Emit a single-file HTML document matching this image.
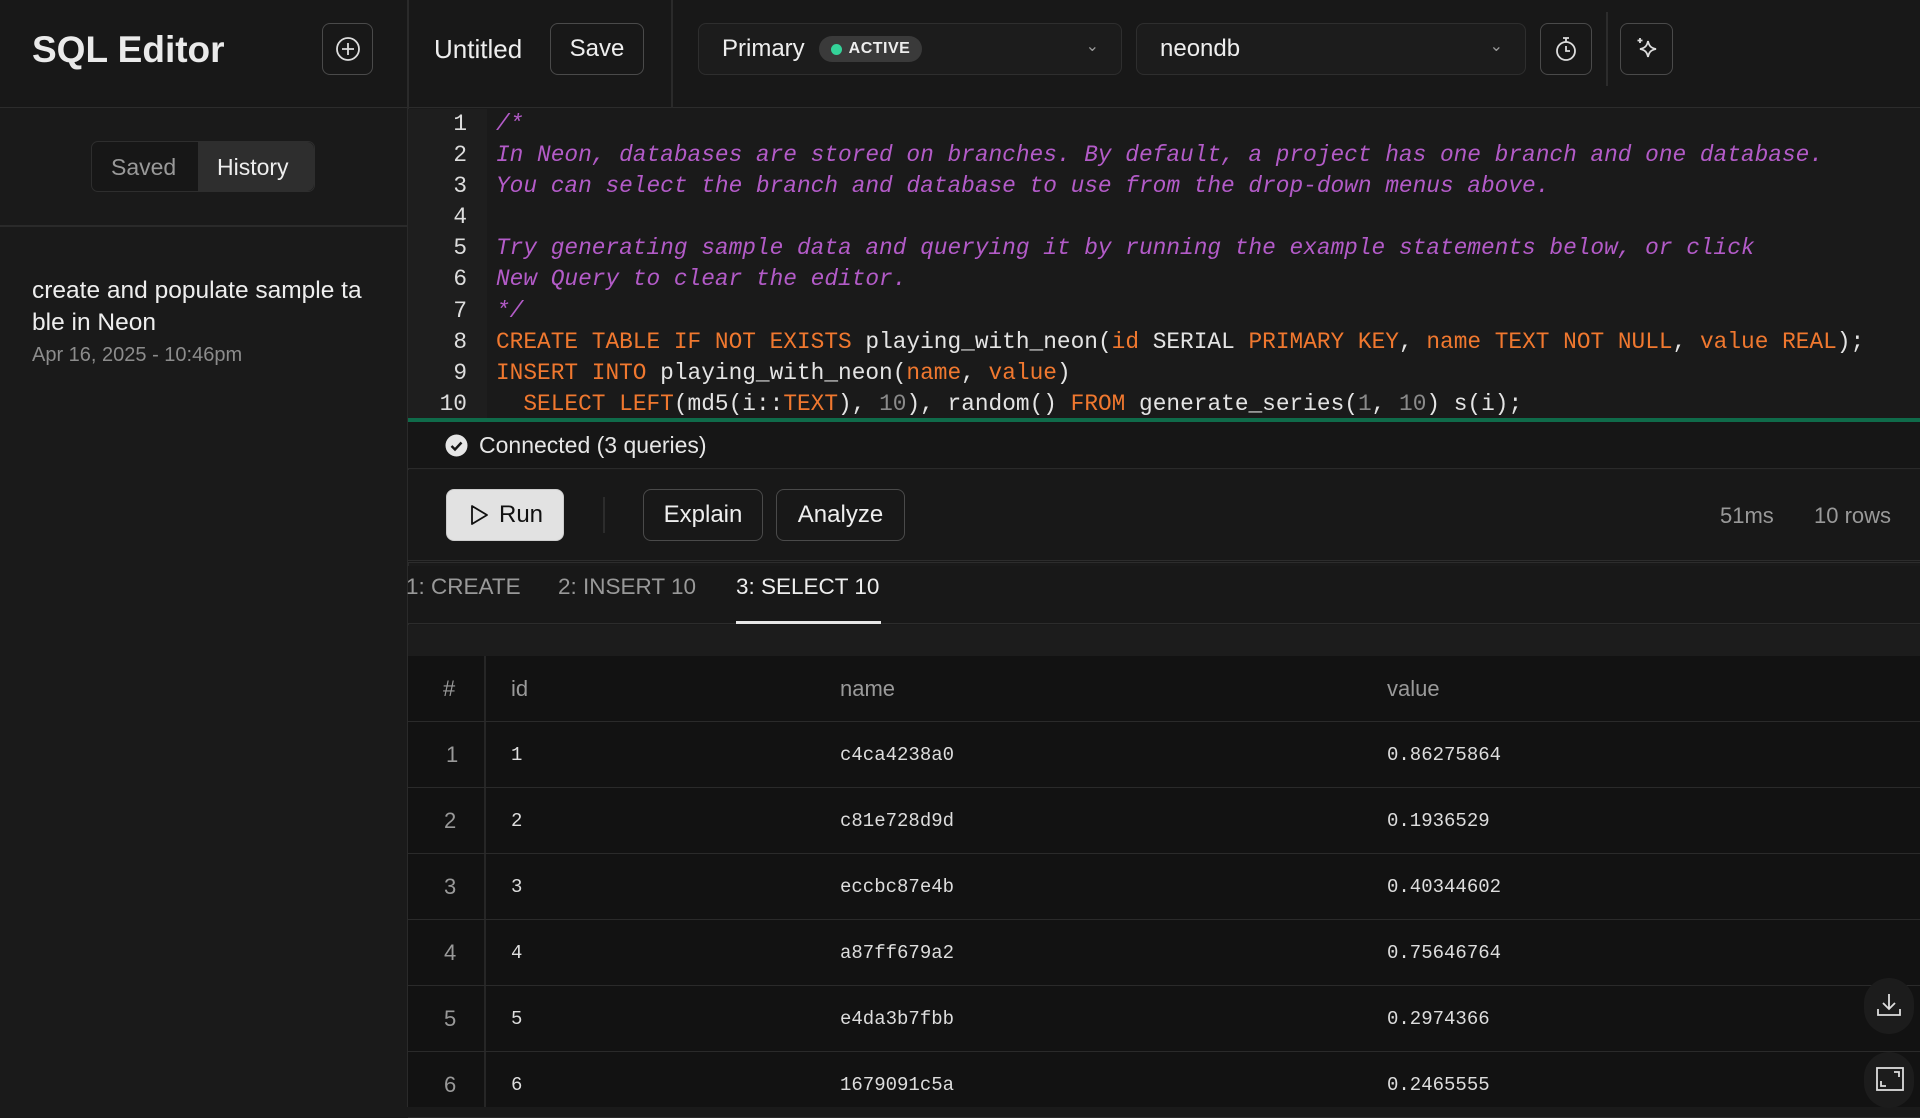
<!DOCTYPE html>
<html><head><meta charset="utf-8"><style>
*{box-sizing:border-box;margin:0;padding:0}
body{width:1920px;height:1107px;overflow:hidden;background:#1a1a1a;color:#e6e6e6;font-family:"Liberation Sans",sans-serif;position:relative}
.abs{position:absolute}
.btn{position:absolute;border:1px solid #4a4a4a;border-radius:8px;display:flex;align-items:center;justify-content:center;font-size:24px;color:#eee}
.code{position:absolute;left:496px;font-family:"Liberation Mono",monospace;font-size:22.8px;white-space:pre;line-height:31.1px;top:109px;color:#e4e4e4}
.gut{position:absolute;left:408px;width:79px;top:109px;font-family:"Liberation Mono",monospace;font-size:22.8px;line-height:31.1px;text-align:right;padding-right:20px;color:#ddd;background:#1e1e1e;height:311px}
.c{color:#b35bc8;font-style:italic}.k{color:#f0782f}.n{color:#8a8a8a}
.row{position:absolute;left:408px;right:0;height:66px;border-bottom:1.5px solid #2a2a2a;font-size:19px}
.row div{position:absolute;top:0;line-height:66px}
.mono{font-family:"Liberation Mono",monospace;color:#ddd}
</style></head><body>
<div class="abs" style="left:0;top:0;width:1920px;height:108px;background:#181818;border-bottom:1.5px solid #2c2c2c"></div>
<div class="abs" style="left:32px;top:29px;font-size:37px;font-weight:bold;color:#eaeaea">SQL Editor</div>
<div class="btn" style="left:322px;top:23px;width:51px;height:52px"><svg width="26" height="26" viewBox="0 0 26 26" fill="none" stroke="#ddd" stroke-width="1.8"><circle cx="13" cy="13" r="11"/><path d="M13 7v12M7 13h12"/></svg></div>
<div class="abs" style="left:407px;top:0;width:1.5px;height:1107px;background:#2a2a2a"></div>
<div class="abs" style="left:434px;top:34px;font-size:26px;color:#eee">Untitled</div>
<div class="btn" style="left:550px;top:23px;width:94px;height:52px">Save</div>
<div class="abs" style="left:671px;top:0;width:1.5px;height:108px;background:#2a2a2a"></div>
<div class="btn" style="left:698px;top:23px;width:424px;height:52px;justify-content:flex-start;padding-left:23px;border-color:#2e2e2e;background:#1c1c1c">Primary
 <span style="margin-left:14px;background:#3a3a3a;border-radius:14px;padding:4px 12px 4px 12px;font-size:16px;font-weight:bold;letter-spacing:.5px;display:flex;align-items:center"><span style="width:11px;height:11px;border-radius:50%;background:#34d399;margin-right:7px"></span>ACTIVE</span>
 <span style="position:absolute;right:22px;top:12px;font-size:16px;color:#999">&#8964;</span></div>
<div class="btn" style="left:1136px;top:23px;width:390px;height:52px;justify-content:flex-start;padding-left:23px;border-color:#2e2e2e;background:#1c1c1c">neondb<span style="position:absolute;right:22px;top:12px;font-size:16px;color:#999">&#8964;</span></div>
<div class="btn" style="left:1540px;top:23px;width:52px;height:52px"><svg width="26" height="28" viewBox="0 0 26 28" fill="none" stroke="#ddd" stroke-width="1.8"><circle cx="13" cy="16" r="9"/><path d="M10 3h6M13 3v4M13 11v5h4"/></svg></div>
<div class="abs" style="left:1606px;top:12px;width:1.5px;height:74px;background:#2c2c2c"></div>
<div class="btn" style="left:1620px;top:23px;width:53px;height:52px"><svg width="28" height="28" viewBox="0 0 28 28" fill="none" stroke="#ddd" stroke-width="1.8"><path d="M15 6c1 5 3 7 8 8-5 1-7 3-8 8-1-5-3-7-8-8 5-1 7-3 8-8z"/><path d="M7 3v5M4.5 5.5h5"/></svg></div>
<div class="abs" style="left:91px;top:141px;width:224px;height:51px;border:1px solid #2e2e2e;border-radius:7px;background:#171717"></div>
<div class="abs" style="left:198px;top:142px;width:116px;height:49px;background:#2e2e2e;border-radius:0 7px 7px 0"></div>
<div class="abs" style="left:111px;top:154px;font-size:23px;color:#999">Saved</div>
<div class="abs" style="left:217px;top:154px;font-size:23px;color:#eee">History</div>
<div class="abs" style="left:0;top:225px;width:407px;height:1.5px;background:#2a2a2a"></div>
<div class="abs" style="left:32px;top:275px;font-size:24.5px;line-height:32px;color:#eee;width:375px;white-space:nowrap">create and populate sample ta<br>ble in Neon</div>
<div class="abs" style="left:32px;top:344px;font-size:20px;color:#8c8c8c">Apr 16, 2025 - 10:46pm</div>
<div class="gut">1<br>2<br>3<br>4<br>5<br>6<br>7<br>8<br>9<br>10</div>
<div class="code"><span class="c">/*
In Neon, databases are stored on branches. By default, a project has one branch and one database.
You can select the branch and database to use from the drop-down menus above.

Try generating sample data and querying it by running the example statements below, or click
New Query to clear the editor.
*/</span>
<span class="k">CREATE TABLE IF NOT EXISTS</span> playing_with_neon(<span class="k">id</span> SERIAL <span class="k">PRIMARY KEY</span>, <span class="k">name</span> <span class="k">TEXT NOT NULL</span>, <span class="k">value</span> <span class="k">REAL</span>);
<span class="k">INSERT INTO</span> playing_with_neon(<span class="k">name</span>, <span class="k">value</span>)
  <span class="k">SELECT LEFT</span>(md5(i::<span class="k">TEXT</span>), <span class="n">10</span>), random() <span class="k">FROM</span> generate_series(<span class="n">1</span>, <span class="n">10</span>) s(i);</div>
<div class="abs" style="left:408px;top:418px;width:1512px;height:4px;background:#0f6b4a"></div>
<div class="abs" style="left:408px;top:422px;width:1512px;height:47px;background:#161616;border-bottom:1.5px solid #2a2a2a"></div>
<svg class="abs" style="left:445px;top:434px" width="23" height="23" viewBox="0 0 23 23"><circle cx="11.5" cy="11.5" r="11" fill="#e6e6e6"/><path d="M6.5 12l3.5 3.5 6.5-7" fill="none" stroke="#161616" stroke-width="2.4"/></svg>
<div class="abs" style="left:479px;top:432px;font-size:23px;color:#e6e6e6">Connected (3 queries)</div>
<div class="abs" style="left:408px;top:470px;width:1512px;height:93px;background:#181818;border-bottom:3px double #2c2c2c"></div>
<div class="btn" style="left:446px;top:489px;width:118px;height:52px;background:#e2e2e2;color:#111;border-color:#ccc"><svg width="24" height="24" viewBox="0 0 24 24" style="margin-right:8px"><path d="M5 3l15 9-15 9z" fill="none" stroke="#111" stroke-width="1.8" stroke-linejoin="round"/></svg>Run</div>
<div class="abs" style="left:603px;top:497px;width:1.5px;height:36px;background:#2c2c2c"></div>
<div class="btn" style="left:643px;top:489px;width:120px;height:52px">Explain</div>
<div class="btn" style="left:776px;top:489px;width:129px;height:52px">Analyze</div>
<div class="abs" style="left:1720px;top:503px;font-size:22px;color:#999">51ms</div>
<div class="abs" style="left:1814px;top:503px;font-size:22px;color:#999">10 rows</div>
<div class="abs" style="left:408px;top:566px;width:1512px;height:58px;background:#181818;border-bottom:1.5px solid #2c2c2c"></div>
<div class="abs" style="left:406px;top:574px;font-size:22.5px;color:#999">1: CREATE</div>
<div class="abs" style="left:558px;top:574px;font-size:22.5px;color:#999">2: INSERT 10</div>
<div class="abs" style="left:736px;top:574px;font-size:22.5px;color:#eee">3: SELECT 10</div>
<div class="abs" style="left:736px;top:621px;width:145px;height:3px;background:#e6e6e6"></div>
<div class="abs" style="left:408px;top:625px;width:1512px;height:31px;background:#1c1c1c"></div>
<div class="abs" style="left:408px;top:656px;width:1512px;height:451px;background:#121212"></div>
<div class="abs" style="left:484px;top:656px;width:1.5px;height:451px;background:#262626"></div>
<div class="row" style="top:656px;font-size:22px;color:#999"><div style="left:35px">#</div><div style="left:103px">id</div><div style="left:432px">name</div><div style="left:979px">value</div></div>
<div class="row" style="top:722px"><div style="left:38px;color:#999;font-size:22px">1</div><div class="mono" style="left:103px">1</div><div class="mono" style="left:432px">c4ca4238a0</div><div class="mono" style="left:979px">0.86275864</div></div>
<div class="row" style="top:788px"><div style="left:36px;color:#999;font-size:22px">2</div><div class="mono" style="left:103px">2</div><div class="mono" style="left:432px">c81e728d9d</div><div class="mono" style="left:979px">0.1936529</div></div>
<div class="row" style="top:854px"><div style="left:36px;color:#999;font-size:22px">3</div><div class="mono" style="left:103px">3</div><div class="mono" style="left:432px">eccbc87e4b</div><div class="mono" style="left:979px">0.40344602</div></div>
<div class="row" style="top:920px"><div style="left:36px;color:#999;font-size:22px">4</div><div class="mono" style="left:103px">4</div><div class="mono" style="left:432px">a87ff679a2</div><div class="mono" style="left:979px">0.75646764</div></div>
<div class="row" style="top:986px"><div style="left:36px;color:#999;font-size:22px">5</div><div class="mono" style="left:103px">5</div><div class="mono" style="left:432px">e4da3b7fbb</div><div class="mono" style="left:979px">0.2974366</div></div>
<div class="row" style="top:1052px"><div style="left:36px;color:#999;font-size:22px">6</div><div class="mono" style="left:103px">6</div><div class="mono" style="left:432px">1679091c5a</div><div class="mono" style="left:979px">0.2465555</div></div>
<div class="abs" style="left:1864px;top:978px;width:50px;height:56px;border-radius:25px;background:#1c1c1c"></div>
<svg class="abs" style="left:1876px;top:992px" width="26" height="26" viewBox="0 0 26 26" fill="none" stroke="#ddd" stroke-width="1.8"><path d="M13 2v15M7 11l6 6 6-6M2 17v6h22v-6"/></svg>
<div class="abs" style="left:1864px;top:1052px;width:50px;height:56px;border-radius:25px;background:#1c1c1c"></div>
<svg class="abs" style="left:1876px;top:1067px" width="28" height="24" viewBox="0 0 28 24" fill="none" stroke="#ddd" stroke-width="1.8"><rect x="1" y="1" width="26" height="22"/><path d="M18 5h5v5M10 19H5v-5"/></svg>
</body></html>
